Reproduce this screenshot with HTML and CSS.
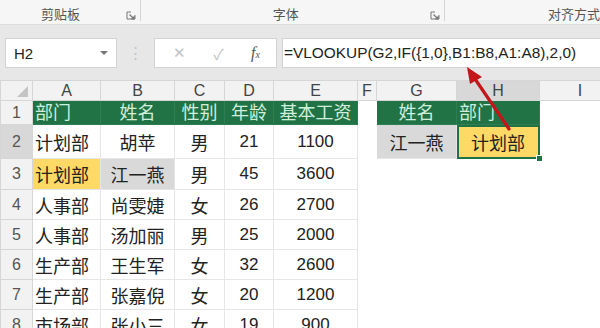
FILE: index.html
```html
<!DOCTYPE html>
<html lang="zh-CN">
<head>
    <meta charset="UTF-8">
    <title>VLOOKUP 反向查找</title>
    <link rel="stylesheet" href="styles.css">
</head>
<body>
    <div class="ribbon">
        <div class="group group1">
            <span class="glabel">剪贴板</span>
            <svg class="launcher" width="10" height="9" viewBox="0 0 10 9"><path d="M1 1 H5 M1 1 V8 H9 V4" fill="none" stroke="#777" stroke-width="1"/><path d="M3.5 3.5 L8 8 M8 5 V8 H5" fill="none" stroke="#777" stroke-width="1.2"/></svg>
        </div>
        <div class="group group2">
            <span class="glabel">字体</span>
            <svg class="launcher" width="10" height="9" viewBox="0 0 10 9"><path d="M1 1 H5 M1 1 V8 H9 V4" fill="none" stroke="#777" stroke-width="1"/><path d="M3.5 3.5 L8 8 M8 5 V8 H5" fill="none" stroke="#777" stroke-width="1.2"/></svg>
        </div>
        <div class="group group3">
            <span class="glabel">对齐方式</span>
        </div>
    </div>

    <div class="formulaRow">
        <div class="nameBox">
            <span>H2</span>
            <span class="dropArrow"></span>
        </div>
        <div class="dots">⋮</div>
        <div class="fxButtons">
            <span class="btnX">✕</span>
            <span class="btnCheck">✓</span>
            <span class="btnFx"><i>f</i><small>x</small></span>
        </div>
        <div class="formulaBox">=VLOOKUP(G2,IF({1,0},B1:B8,A1:A8),2,0)</div>
    </div>

    <div class="sheet">
        <table class="grid">
            <colgroup>
                <col class="cRow"><col class="cA"><col class="cB"><col class="cC"><col class="cD"><col class="cE"><col class="cF"><col class="cG"><col class="cH"><col class="cI">
            </colgroup>
            <thead>
                <tr class="colHead">
                    <th class="corner"><span class="tri"></span></th>
                    <th>A</th><th>B</th><th>C</th><th>D</th><th>E</th><th>F</th><th>G</th><th class="selHead">H</th><th>I</th>
                </tr>
            </thead>
            <tbody>
                <tr class="r1">
                    <th>1</th>
                    <td class="head left">部门</td><td class="head">姓名</td><td class="head">性别</td><td class="head">年龄</td><td class="head">基本工资</td>
                    <td class="blank"></td><td class="head">姓名</td><td class="head left">部门</td><td class="blank"></td>
                </tr>
                <tr class="r2">
                    <th class="selRow">2</th>
                    <td class="left">计划部</td><td>胡苹</td><td>男</td><td class="num">21</td><td class="num">1100</td>
                    <td class="blank"></td><td class="grayFill">江一燕</td><td class="yellowFill active">计划部<span class="handle"></span></td><td class="blank"></td>
                </tr>
                <tr class="r3">
                    <th>3</th>
                    <td class="left yellowFill">计划部</td><td class="grayFill">江一燕</td><td>男</td><td class="num">45</td><td class="num">3600</td>
                    <td class="blank" colspan="4"></td>
                </tr>
                <tr>
                    <th>4</th>
                    <td class="left">人事部</td><td>尚雯婕</td><td>女</td><td class="num">26</td><td class="num">2700</td>
                    <td class="blank" colspan="4"></td>
                </tr>
                <tr>
                    <th>5</th>
                    <td class="left">人事部</td><td>汤加丽</td><td>男</td><td class="num">25</td><td class="num">2000</td>
                    <td class="blank" colspan="4"></td>
                </tr>
                <tr>
                    <th>6</th>
                    <td class="left">生产部</td><td>王生军</td><td>女</td><td class="num">32</td><td class="num">2600</td>
                    <td class="blank" colspan="4"></td>
                </tr>
                <tr>
                    <th>7</th>
                    <td class="left">生产部</td><td>张嘉倪</td><td>女</td><td class="num">20</td><td class="num">1200</td>
                    <td class="blank" colspan="4"></td>
                </tr>
                <tr>
                    <th>8</th>
                    <td class="left">市场部</td><td>张小三</td><td>女</td><td class="num">19</td><td class="num">900</td>
                    <td class="blank" colspan="4"></td>
                </tr>
            </tbody>
        </table>

        <!-- 红色箭头指向公式里的 B1:B8 -->
        <svg class="arrow" width="80" height="80" viewBox="0 0 80 80">
            <path d="M48 62 L10 6" stroke="#c2161b" stroke-width="3.2" stroke-linecap="round" fill="none"/>
            <path d="M6 0 L21 10 L9 17 Z" fill="#c2161b"/>
        </svg>
    </div>
</body>
</html>
```

FILE: styles.css
```css
body {
    margin: 0;
    width: 600px;
    height: 328px;
    overflow: hidden;
    background-color: #e7e7e7;
    font-family: "Liberation Sans", "Noto Sans CJK SC", sans-serif;
    color: #222;
}

.ribbon {
    display: flex;
    height: 24px;
    background-color: #f6f6f6;
    border-bottom: 1px solid #dcdcdc;
}

.group {
    display: flex;
    align-items: center;
    height: 21px;
    border-right: 1px solid #d4d4d4;
}

.group1 {
    width: 142px;
}

.group2 {
    width: 308px;
}

.group3 {
    flex: 1;
    border-right: none;
}

.glabel {
    font-size: 13px;
    color: #555;
    white-space: nowrap;
    padding-top: 6px;
}

.group1 .glabel {
    margin-left: 41px;
}

.group2 .glabel {
    margin-left: 132px;
}

.group3 .glabel {
    margin-left: 103px;
}

.launcher {
    margin-left: auto;
    margin-right: 4px;
    margin-top: 9px;
}

.formulaRow {
    display: flex;
    height: 30px;
    margin-top: 13px;
    margin-bottom: 12px;
}

.nameBox {
    display: flex;
    align-items: center;
    width: 112px;
    margin-left: 5px;
    background-color: #fff;
    border: 1px solid #d2d2d2;
    font-size: 15px;
    padding-left: 8px;
    box-sizing: border-box;
}

.dropArrow {
    margin-left: auto;
    margin-right: 8px;
    border-left: 4px solid transparent;
    border-right: 4px solid transparent;
    border-top: 4px solid #777;
}

.dots {
    width: 37px;
    text-align: center;
    color: #c4c4c4;
    font-size: 15px;
    line-height: 30px;
}

.fxButtons {
    display: flex;
    align-items: center;
    justify-content: space-between;
    width: 123px;
    padding: 0 16px 0 18px;
    box-sizing: border-box;
    background-color: #fff;
    border: 1px solid #d2d2d2;
}

.btnX, .btnCheck {
    color: #c2c2c2;
    font-size: 15px;
}

.btnFx {
    font-family: "Liberation Serif", serif;
    color: #555;
    font-size: 16px;
}

.btnFx small {
    font-size: 10px;
    font-style: italic;
}

.formulaBox {
    flex: 1;
    margin-left: 5px;
    background-color: #fff;
    border: 1px solid #d2d2d2;
    border-right: none;
    font-size: 15.4px;
    line-height: 28px;
    padding-left: 1px;
    white-space: nowrap;
    overflow: hidden;
}

.sheet {
    position: relative;
    background-color: #fff;
}

.grid {
    border-collapse: collapse;
    table-layout: fixed;
    width: 620px;
    font-size: 18px;
}

.cRow { width: 32px; }
.cA { width: 68px; }
.cB { width: 74px; }
.cC { width: 50px; }
.cD { width: 49px; }
.cE { width: 84px; }
.cF { width: 19px; }
.cG { width: 80px; }
.cH { width: 83px; }
.cI { width: 81px; }

.grid th {
    background-color: #f2f2f2;
    color: #555;
    font-weight: normal;
    font-size: 16px;
    border: 1px solid #d6d6d6;
    padding: 0;
}

.colHead th {
    height: 19px;
    color: #444;
    line-height: 19px;
}

.corner {
    position: relative;
}

.tri {
    position: absolute;
    right: 4px;
    bottom: 3px;
    border-left: 11px solid transparent;
    border-bottom: 11px solid #c4c4c4;
}

.grid .selHead {
    background-color: #d8d8d8;
}

.grid .selRow {
    background-color: #d8d8d8;
}

.grid td {
    border: 1px solid #e6e6e6;
    padding: 0 2px;
    text-align: center;
    white-space: nowrap;
    overflow: hidden;
}

.grid tbody tr {
    height: 30px;
}

.grid tr.r1 {
    height: 24px;
}

.grid tr.r2 {
    height: 34px;
}

.grid tr.r3 {
    height: 31px;
}

.grid td.left {
    text-align: left;
}

.grid td.num {
    font-size: 17px;
}

.grid td.head {
    background-color: #217346;
    color: #cfeedb;
    border-color: #2f7d52;
    line-height: 22px;
}

.grid td.blank {
    border-color: #fff;
}

.grid td.grayFill {
    background-color: #d9d9d9;
}

.grid td.yellowFill {
    background-color: #ffd966;
}

.grid td.active {
    position: relative;
    outline: 2px solid #217346;
    outline-offset: -2px;
    overflow: visible;
}

.handle {
    position: absolute;
    right: -4px;
    bottom: -4px;
    width: 5px;
    height: 5px;
    background-color: #217346;
    border: 1px solid #fff;
}

.arrow {
    position: absolute;
    left: 461px;
    top: -13px;
    overflow: visible;
}
```
